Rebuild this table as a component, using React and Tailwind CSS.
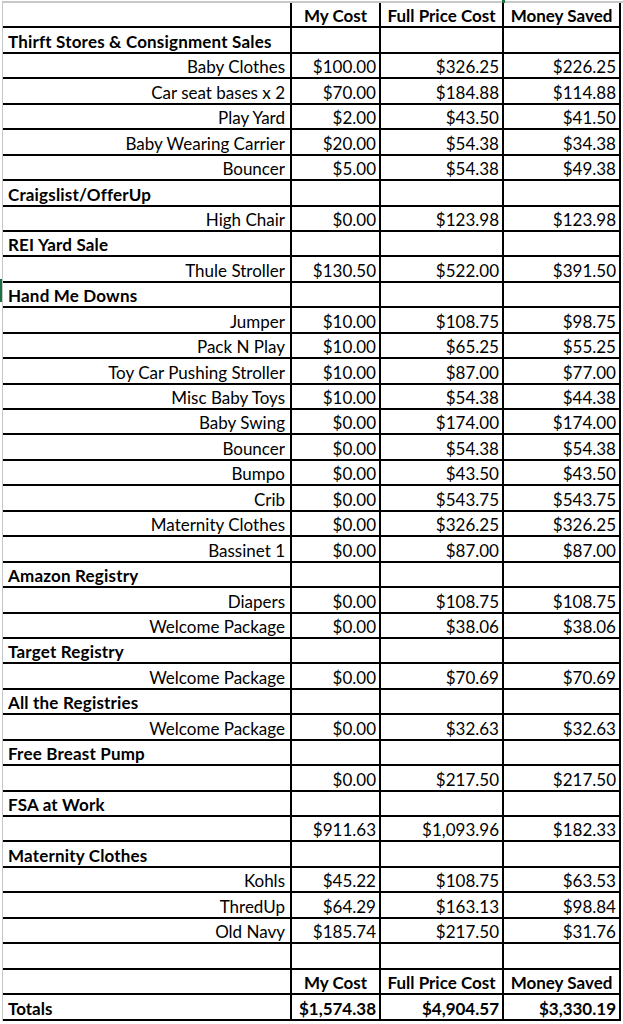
import React from "react";

const ROWS = [
  { t: "hdr" },
  { t: "sec", label: "Thirft Stores & Consignment Sales" },
  { t: "item", label: "Baby Clothes", v: ["$100.00", "$326.25", "$226.25"] },
  { t: "item", label: "Car seat bases x 2", v: ["$70.00", "$184.88", "$114.88"] },
  { t: "item", label: "Play Yard", v: ["$2.00", "$43.50", "$41.50"] },
  { t: "item", label: "Baby Wearing Carrier", v: ["$20.00", "$54.38", "$34.38"] },
  { t: "item", label: "Bouncer", v: ["$5.00", "$54.38", "$49.38"] },
  { t: "sec", label: "Craigslist/OfferUp" },
  { t: "item", label: "High Chair", v: ["$0.00", "$123.98", "$123.98"] },
  { t: "sec", label: "REI Yard Sale" },
  { t: "item", label: "Thule Stroller", v: ["$130.50", "$522.00", "$391.50"] },
  { t: "sec", label: "Hand Me Downs" },
  { t: "item", label: "Jumper", v: ["$10.00", "$108.75", "$98.75"] },
  { t: "item", label: "Pack N Play", v: ["$10.00", "$65.25", "$55.25"] },
  { t: "item", label: "Toy Car Pushing Stroller", v: ["$10.00", "$87.00", "$77.00"] },
  { t: "item", label: "Misc Baby Toys", v: ["$10.00", "$54.38", "$44.38"] },
  { t: "item", label: "Baby Swing", v: ["$0.00", "$174.00", "$174.00"] },
  { t: "item", label: "Bouncer", v: ["$0.00", "$54.38", "$54.38"] },
  { t: "item", label: "Bumpo", v: ["$0.00", "$43.50", "$43.50"] },
  { t: "item", label: "Crib", v: ["$0.00", "$543.75", "$543.75"] },
  { t: "item", label: "Maternity Clothes", v: ["$0.00", "$326.25", "$326.25"] },
  { t: "item", label: "Bassinet 1", v: ["$0.00", "$87.00", "$87.00"] },
  { t: "sec", label: "Amazon Registry" },
  { t: "item", label: "Diapers", v: ["$0.00", "$108.75", "$108.75"] },
  { t: "item", label: "Welcome Package", v: ["$0.00", "$38.06", "$38.06"] },
  { t: "sec", label: "Target Registry" },
  { t: "item", label: "Welcome Package", v: ["$0.00", "$70.69", "$70.69"] },
  { t: "sec", label: "All the Registries" },
  { t: "item", label: "Welcome Package", v: ["$0.00", "$32.63", "$32.63"] },
  { t: "sec", label: "Free Breast Pump" },
  { t: "item", label: "", v: ["$0.00", "$217.50", "$217.50"] },
  { t: "sec", label: "FSA at Work" },
  { t: "item", label: "", v: ["$911.63", "$1,093.96", "$182.33"] },
  { t: "sec", label: "Maternity Clothes" },
  { t: "item", label: "Kohls", v: ["$45.22", "$108.75", "$63.53"] },
  { t: "item", label: "ThredUp", v: ["$64.29", "$163.13", "$98.84"] },
  { t: "item", label: "Old Navy", v: ["$185.74", "$217.50", "$31.76"] },
  { t: "blank" },
  { t: "hdr" },
  { t: "total", label: "Totals", v: ["$1,574.38", "$4,904.57", "$3,330.19"] },
];

const HEADERS = ["My Cost", "Full Price Cost", "Money Saved"];

const Row = ({ row }) => {
  const isHdr = row.t === "hdr";
  const bold = isHdr || row.t === "sec" || row.t === "total";
  const vals = isHdr ? HEADERS : row.v || ["", "", ""];
  const labelAlign =
    row.t === "item"
      ? "justify-end pr-[5px]"
      : row.t === "sec"
      ? "justify-start pl-[5px] tracking-[0.18px]"
      : "justify-start pl-[5px]";
  const valAlign = isHdr ? "justify-center" : "justify-end pr-[3px]";

  return (
    <div className={`flex h-[25.45px] ${bold ? "font-bold" : ""}`}>
      <div className={`w-[289px] shrink-0 flex items-end border-b-2 border-r-2 border-black whitespace-nowrap ${labelAlign}`}>
        <span>{row.label || ""}</span>
      </div>
      <div className={`w-[89px] shrink-0 flex items-end border-b-2 border-r-2 border-black whitespace-nowrap ${valAlign}`}>
        <span>{vals[0]}</span>
      </div>
      <div className={`w-[123px] shrink-0 flex items-end border-b-2 border-r-2 border-black whitespace-nowrap ${valAlign}`}>
        <span>{vals[1]}</span>
      </div>
      <div className={`w-[117px] shrink-0 flex items-end border-b-2 border-r-2 border-black whitespace-nowrap ${valAlign}`}>
        <span>{vals[2]}</span>
      </div>
    </div>
  );
};

export default function App() {
  return (
    <div className="relative w-[623px] h-[1024px] overflow-hidden bg-white text-black font-['Lato',sans-serif] text-[17px] leading-[20px]">
      {/* excel gridlines */}
      <div className="ml-[2px] mt-[1px] border-t-2 border-l border-[#c8c8c8]">
        {ROWS.map((row, i) => (
          <Row key={i} row={row} />
        ))}
      </div>

      {/* selection markers */}
      <div className="absolute left-[502px] top-0 w-[3px] h-[3px] bg-[#1e7145]" />
      <div className="absolute left-0 top-[279px] w-[2px] h-[23px] bg-[#1e7145]" />
    </div>
  );
}
